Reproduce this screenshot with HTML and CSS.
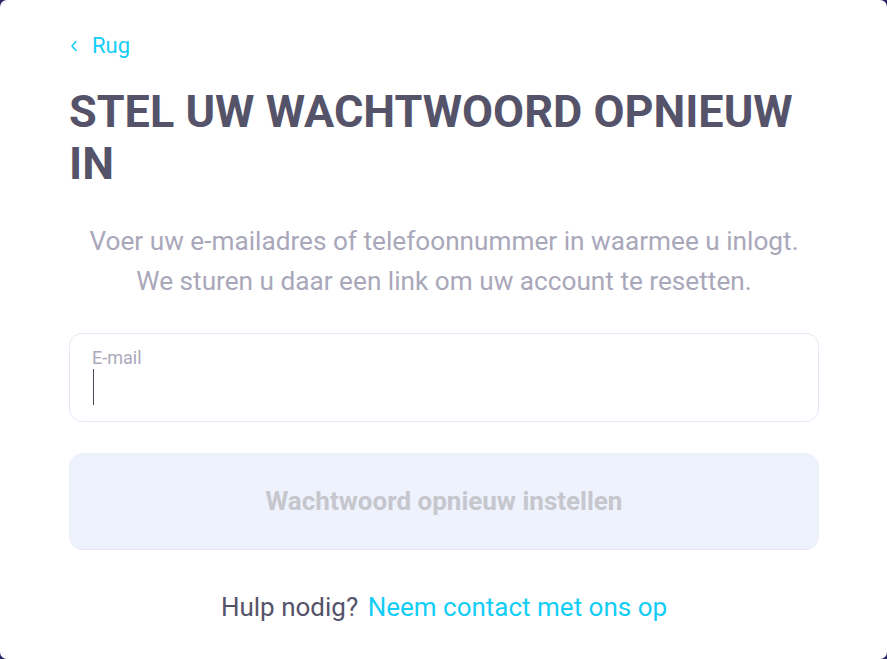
FILE: index.html
```html
<!DOCTYPE html>
<html lang="nl">
<head>
    <meta charset="UTF-8">
    <meta name="viewport" content="width=device-width, initial-scale=1.0">
    <title>Wachtwoord opnieuw instellen</title>
    <link rel="stylesheet" href="styles.css">
</head>
<body>
    <div class="card">
        <a href="#" class="back-link">
            <svg class="back-icon" width="8" height="12" viewBox="0 0 8 12">
                <path d="M6 1.5 L2 6 L6 10.5" fill="none" stroke="currentColor" stroke-width="1.6" stroke-linecap="round" stroke-linejoin="round"/>
            </svg>
            <span>Rug</span>
        </a>

        <h1 class="title">STEL UW WACHTWOORD OPNIEUW IN</h1>

        <p class="intro">
            Voer uw e-mailadres of telefoonnummer in waarmee u inlogt.<br>
            We sturen u daar een link om uw account te resetten.
        </p>

        <label class="field">
            <span class="field-label">E-mail</span>
            <span class="field-input"><span class="caret"></span></span>
        </label>

        <button class="btn-submit" disabled>Wachtwoord opnieuw instellen</button>

        <p class="help">Hulp nodig? <a href="#" class="help-link">Neem contact met ons op</a></p>
    </div>
</body>
</html>
```

FILE: styles.css
```css
:root {
    --frame-bg: #2a2566;
    --card-bg: #ffffff;
    --heading: #55536a;
    --muted: #a9a8ba;
    --accent: #12cdf6;
    --border: #e9e7f6;
    --btn-bg: #eef2fd;
    --btn-text: #c6c6cd;
}

* {
    margin: 0;
    padding: 0;
    box-sizing: border-box;
    font-family: Roboto, 'Liberation Sans', Arial, sans-serif;
}

html, body {
    height: 100%;
}

body {
    background-color: var(--frame-bg);
}

.card {
    background-color: var(--card-bg);
    border-radius: 7px;
    min-height: 100%;
    padding: 30px 68px 0 69px;
    display: flex;
    flex-direction: column;
}

.back-link {
    display: inline-flex;
    align-items: center;
    gap: 14px;
    align-self: flex-start;
    color: var(--accent);
    text-decoration: none;
    font-size: 22px;
    line-height: 32px;
}

.back-icon {
    margin-left: 1px;
}

.title {
    margin-top: 24px;
    color: var(--heading);
    font-size: 45px;
    font-weight: 700;
    line-height: 52px;
}

.intro {
    margin-top: 31px;
    text-align: center;
    color: var(--muted);
    font-size: 26.2px;
    line-height: 40px;
}

.field {
    margin-top: 32px;
    display: flex;
    flex-direction: column;
    height: 89px;
    border: 1px solid var(--border);
    border-radius: 13px;
    padding: 13px 22px 0;
}

.field-label {
    color: var(--muted);
    font-size: 18px;
    line-height: 22px;
}

.field-input {
    display: block;
    height: 40px;
}

.caret {
    display: block;
    width: 1px;
    height: 36px;
    margin-left: 1px;
    background-color: #4b4a5c;
}

.btn-submit {
    margin-top: 31px;
    height: 96px;
    border: none;
    border-radius: 14px;
    background-color: var(--btn-bg);
    box-shadow: 0 1px 0 var(--border);
    color: var(--btn-text);
    font-size: 26px;
    font-weight: 700;
}

.help {
    margin-top: 43px;
    text-align: center;
    color: var(--heading);
    font-size: 26px;
    line-height: 30px;
}

.help-link {
    margin-left: 3px;
    color: var(--accent);
    text-decoration: none;
}
```
